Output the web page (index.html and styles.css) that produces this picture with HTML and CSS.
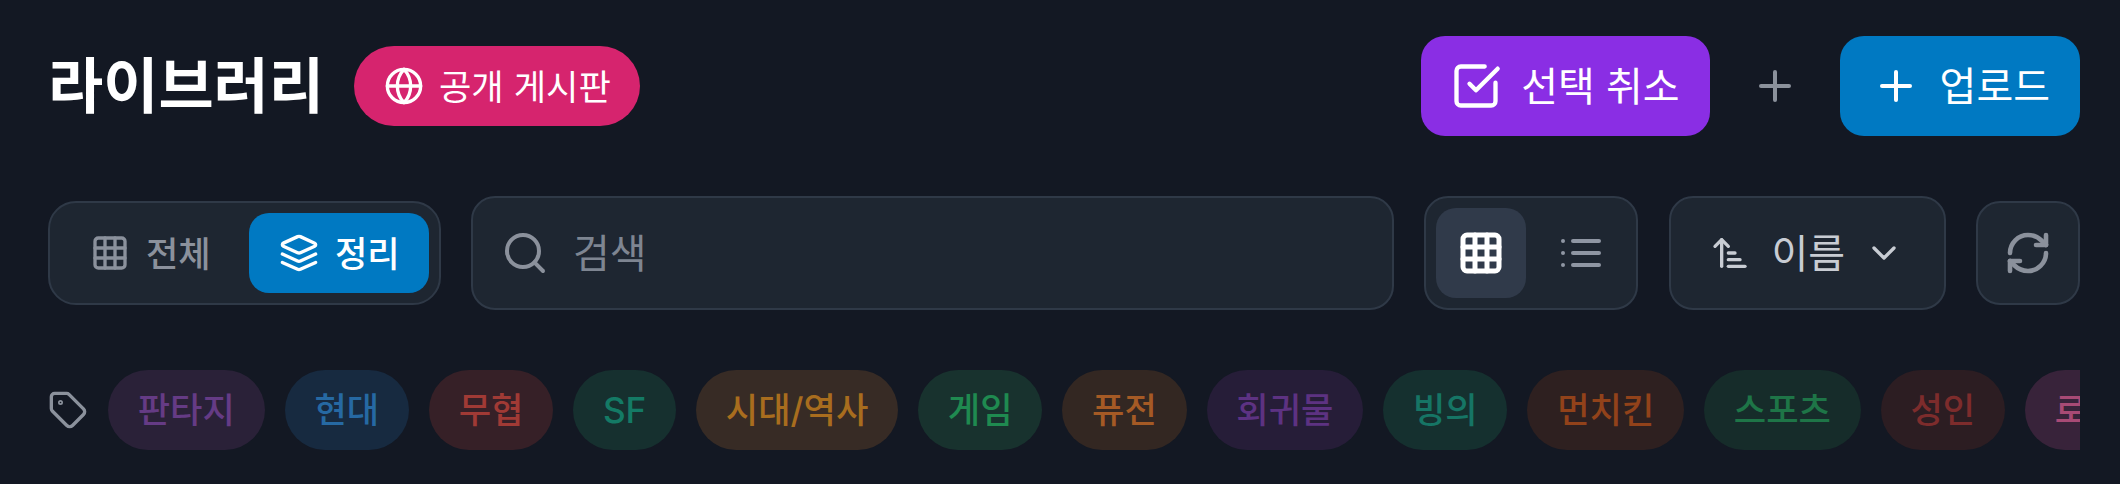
FILE: index.html
```html
<!DOCTYPE html>
<html lang="ko">
<head>
<meta charset="utf-8">
<title>라이브러리</title>
<link rel="stylesheet" href="styles.css">
</head>
<body>
<main class="page">
  <header class="top">
    <div class="title-group">
      <h1 class="title">라이브러리</h1>
      <a class="board-pill">
        <svg class="i40" viewBox="0 0 24 24"><circle cx="12" cy="12" r="10"/><path d="M12 2a14.5 14.5 0 0 0 0 20 14.5 14.5 0 0 0 0-20"/><path d="M2 12h20"/></svg>
        <span class="lift">공개 게시판</span>
      </a>
    </div>
    <div class="actions">
      <button class="btn btn-purple">
        <svg class="i52" viewBox="0 0 24 24"><path d="M21 10.5V19a2 2 0 0 1-2 2H5a2 2 0 0 1-2-2V5a2 2 0 0 1 2-2h11"/><path d="m9 11 3 3L22 4"/></svg>
        <span class="lift">선택 취소</span>
      </button>
      <button class="btn-plain">
        <svg class="i48" viewBox="0 0 24 24"><path d="M5 12h14"/><path d="M12 5v14"/></svg>
      </button>
      <button class="btn btn-blue">
        <svg class="i48" viewBox="0 0 24 24"><path d="M5 12h14"/><path d="M12 5v14"/></svg>
        <span class="lift">업로드</span>
      </button>
    </div>
  </header>

  <section class="toolbar">
    <div class="box seg">
      <button class="seg-btn">
        <svg class="i40" viewBox="0 0 24 24"><rect x="3" y="3" width="18" height="18" rx="2"/><path d="M3 9h18"/><path d="M3 15h18"/><path d="M9 3v18"/><path d="M15 3v18"/></svg>
        <span class="lift">전체</span>
      </button>
      <button class="seg-btn seg-on">
        <svg class="i40" viewBox="0 0 24 24"><path d="m12.83 2.18a2 2 0 0 0-1.66 0L2.6 6.08a1 1 0 0 0 0 1.83l8.58 3.91a2 2 0 0 0 1.66 0l8.58-3.9a1 1 0 0 0 0-1.83Z"/><path d="m22 17.65-9.17 4.16a2 2 0 0 1-1.66 0L2 17.65"/><path d="m22 12.65-9.17 4.16a2 2 0 0 1-1.66 0L2 12.65"/></svg>
        <span class="lift">정리</span>
      </button>
    </div>
    <label class="box search">
      <svg class="i48" viewBox="0 0 24 24"><circle cx="11" cy="11" r="8"/><path d="m21 21-4.3-4.3"/></svg>
      <span class="placeholder lift">검색</span>
    </label>
    <div class="box views">
      <button class="view-btn view-on">
        <svg class="i48" viewBox="0 0 24 24"><rect x="3" y="3" width="18" height="18" rx="2"/><path d="M3 9h18"/><path d="M3 15h18"/><path d="M9 3v18"/><path d="M15 3v18"/></svg>
      </button>
      <button class="view-btn">
        <svg class="i48" viewBox="0 0 24 24"><path d="M3 12h.01"/><path d="M3 18h.01"/><path d="M3 6h.01"/><path d="M8 12h13"/><path d="M8 18h13"/><path d="M8 6h13"/></svg>
      </button>
    </div>
    <button class="box sort">
      <svg class="i40" viewBox="0 0 24 24"><path d="m3 8 4-4 4 4"/><path d="M7 4v16"/><path d="M11 12h4"/><path d="M11 16h7"/><path d="M11 20h10"/></svg>
      <span class="sort-label lift">이름</span>
      <svg class="i40" viewBox="0 0 24 24"><path d="m6 9 6 6 6-6"/></svg>
    </button>
    <button class="box refresh">
      <svg class="i48" viewBox="0 0 24 24"><path d="M3 12a9 9 0 0 1 9-9 9.75 9.75 0 0 1 6.74 2.74L21 8"/><path d="M21 3v5h-5"/><path d="M21 12a9 9 0 0 1-9 9 9.75 9.75 0 0 1-6.74-2.74L3 16"/><path d="M8 16H3v5"/></svg>
    </button>
  </section>

  <section class="tags">
    <svg class="i40 tag-icon" viewBox="0 0 24 24"><path d="M12.586 2.586A2 2 0 0 0 11.172 2H4a2 2 0 0 0-2 2v7.172a2 2 0 0 0 .586 1.414l8.704 8.704a2.426 2.426 0 0 0 3.42 0l6.58-6.58a2.426 2.426 0 0 0 0-3.42z"/><circle cx="7.5" cy="7.5" r=".5"/></svg>
    <span class="tag t-fantasy">판타지</span>
    <span class="tag t-modern">현대</span>
    <span class="tag t-wuxia">무협</span>
    <span class="tag t-sf">SF</span>
    <span class="tag t-history">시대/역사</span>
    <span class="tag t-game">게임</span>
    <span class="tag t-fusion">퓨전</span>
    <span class="tag t-regress">회귀물</span>
    <span class="tag t-possess">빙의</span>
    <span class="tag t-munchkin">먼치킨</span>
    <span class="tag t-sports">스포츠</span>
    <span class="tag t-adult">성인</span>
    <span class="tag t-romance">로맨스</span>
  </section>
</main>
</body>
</html>
```
FILE: styles.css
```css
* { box-sizing: border-box; }
html, body { margin: 0; height: 100%; }
body {
  background: #131823;
  color: #fff;
  font-family: Inter, "Noto Sans CJK KR", sans-serif;
  overflow: hidden;
}
button { font: inherit; color: inherit; background: none; border: 0; padding: 0; }
svg { fill: none; stroke: currentColor; stroke-width: 2; stroke-linecap: round; stroke-linejoin: round; flex: none; display: block; }
.i40 { width: 40px; height: 40px; }
.i48 { width: 48px; height: 48px; }
.i52 { width: 52px; height: 52px; }
.lift { padding-bottom: 4px; }
.page { padding: 36px 40px 0 48px; }

.top { display: flex; justify-content: space-between; align-items: center; height: 100px; }
.title-group { display: flex; align-items: center; gap: 30px; }
.title { margin: 0; font-size: 60px; font-weight: 700; line-height: 80px; }
.board-pill {
  display: flex; align-items: center; gap: 15px;
  height: 80px; padding: 0 29px 0 30px; border-radius: 40px;
  background: #d6246e; font-size: 35.2px;
}
.actions { display: flex; align-items: center; gap: 41px; }
.btn {
  display: flex; align-items: center;
  height: 100px; border-radius: 24px; font-size: 40px;
  padding: 0 30px;
}
.btn-purple { background: #8a2ee4; gap: 19px; padding-left: 29px; }
.btn-blue { background: #0079c2; gap: 20px; padding-left: 32px; }
.btn-plain { color: #8b919b; width: 48px; height: 48px; }

.toolbar { display: flex; align-items: center; gap: 30.5px; margin-top: 60px; height: 114px; }
.box { background: #1e2631; border: 2px solid #2f3947; border-radius: 24px; }
.seg { display: flex; gap: 9px; padding: 10px; height: 104px; border-radius: 28px; margin-right: -0.5px; }
.seg-btn {
  display: flex; align-items: center; gap: 16px;
  width: 180px; height: 80px; padding-left: 30px;
  border-radius: 20px; font-size: 35.2px; font-weight: 500; color: #8b919c;
}
.seg-on { background: #0079c2; color: #fff; }
.search {
  flex: 1; display: flex; align-items: center; gap: 24px;
  height: 114px; padding: 0 28px; color: #8b919c;
}
.placeholder { font-size: 40px; color: #7e8591; }
.views { display: flex; gap: 10px; padding: 10px; height: 114px; color: #8f96a3; }
.view-btn { display: flex; align-items: center; justify-content: center; width: 90px; height: 90px; border-radius: 20px; }
.view-on { background: #303a4a; color: #fff; }
.view-on svg { stroke-width: 2.5; }
.sort {
  display: flex; align-items: center;
  width: 277px; height: 114px; padding: 0 38px 0 39px; color: #c8ccd3;
  font-size: 40px;
}
.sort-label { margin: 0 19px 0 22px; }
.refresh {
  display: flex; align-items: center; justify-content: center;
  width: 104px; height: 104px; color: #8b919c;
}
.refresh svg { stroke-width: 2.3; }

.tags { display: flex; align-items: center; gap: 20px; margin-top: 60px; height: 80px; overflow: hidden; }
.tag-icon { color: #8b919c; }
.tag {
  flex: none; height: 80px; line-height: 80px; padding: 0 29.76px;
  border-radius: 40px; font-size: 35.2px; font-weight: 500;
}
.t-fantasy { background: #2a2138; color: #653b85; }
.t-modern { background: #172a40; color: #2669a3; }
.t-wuxia { background: #362027; color: #a03a35; }
.t-sf { background: #16302f; color: #147a65; }
.t-history { background: #372b25; color: #a86d1e; }
.t-game { background: #18322e; color: #1f8a50; }
.t-fusion { background: #332722; color: #a55a25; }
.t-regress { background: #261d38; color: #5d3282; }
.t-possess { background: #15302f; color: #167565; }
.t-munchkin { background: #2e2020; color: #92421a; }
.t-sports { background: #162c2a; color: #1e7547; }
.t-adult { background: #2c1d22; color: #7d2c2c; }
.t-romance { background: #38233a; color: #a84a75; }
```
